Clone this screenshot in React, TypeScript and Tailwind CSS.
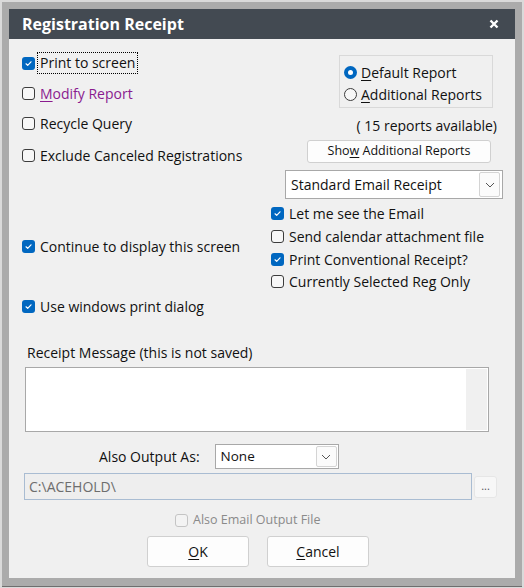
import React from 'react';

const font = { fontFamily: '"Open Sans", "Noto Sans", sans-serif' };

function Check({ checked = false, disabled = false }: { checked?: boolean; disabled?: boolean }) {
  if (checked) {
    return (
      <span className="flex h-[13px] w-[13px] shrink-0 items-center justify-center rounded-[3px] bg-[#0067c0]">
        <svg width="9" height="9" viewBox="0 0 9 9" fill="none">
          <path d="M2 4.8 L3.7 6.3 L7 2.8" stroke="white" strokeWidth="1.2" strokeLinecap="round" strokeLinejoin="round" />
        </svg>
      </span>
    );
  }
  return (
    <span
      className={`h-[13px] w-[13px] shrink-0 rounded-[3px] border ${
        disabled ? 'border-[#c4c4c4] bg-[#f3f3f3]' : 'border-[#3c3c3c] bg-[#f7f7f7]'
      }`}
    />
  );
}

function Radio({ checked = false }: { checked?: boolean }) {
  if (checked) {
    return (
      <span className="flex h-[13px] w-[13px] shrink-0 items-center justify-center rounded-full bg-[#0067c0]">
        <span className="h-[5px] w-[5px] rounded-full bg-white" />
      </span>
    );
  }
  return <span className="h-[13px] w-[13px] shrink-0 rounded-full border border-[#3c3c3c] bg-[#f7f7f7]" />;
}

function Chevron() {
  return (
    <svg width="10" height="6" viewBox="0 0 10 6" fill="none">
      <path d="M1 1 L5 5 L9 1" stroke="#555" strokeWidth="1" />
    </svg>
  );
}

function CheckRow({ checked, label, className = '' }: { checked?: boolean; label: React.ReactNode; className?: string }) {
  return (
    <div className={`flex h-[22px] items-center gap-[5px] ${className}`}>
      <Check checked={checked} />
      <span className="whitespace-nowrap">{label}</span>
    </div>
  );
}

export default function App() {
  return (
    <div className="h-[588px] w-[524px] bg-[#dadada] px-[2px] pt-[2px] pb-[1px] text-[14px] text-[#111]" style={font}>
      <div className="flex h-full flex-col border-b border-[#6e6e6e] bg-[#ababab] px-[7px] pt-[7px] pb-[7px]">
        {/* title bar */}
        <div className="flex h-[30px] shrink-0 items-center justify-between bg-[#434a52] pl-[13px] pr-[16px]">
          <span className="text-[16px] font-bold text-white">Registration Receipt</span>
          <svg width="10" height="10" viewBox="0 0 10 10">
            <path d="M1.5 1.5 L8.5 8.5 M8.5 1.5 L1.5 8.5" stroke="white" strokeWidth="2.4" />
          </svg>
        </div>

        <div className="flex h-[539px] flex-col bg-[#f0f0f0] pl-[13px]">
          {/* top section */}
          <div className="flex">
            <div className="flex w-[249px] flex-col">
              <div className="mt-[13px] flex h-[22px] items-center gap-[2px]">
                <Check checked />
                <span className="border border-dotted border-black px-[2px] leading-[20px] whitespace-nowrap">Print to screen</span>
              </div>
              <CheckRow
                className="mt-[8px]"
                label={
                  <span className="text-[#8a1b8f]">
                    <span className="underline underline-offset-2">M</span>odify Report
                  </span>
                }
              />
              <CheckRow className="mt-[8px]" label="Recycle Query" />
              <CheckRow className="mt-[10px]" label="Exclude Canceled Registrations" />
              <CheckRow className="mt-[69px]" checked label="Continue to display this screen" />
              <CheckRow className="mt-[38px]" checked label="Use windows print dialog" />
            </div>

            <div className="flex w-[232px] flex-col">
              <div className="mt-[16px] ml-[68px] flex h-[53px] w-[154px] flex-col border border-[#d9d9d9] pt-[5px] pl-[4px]">
                <div className="flex h-[22px] items-center gap-[4px]">
                  <Radio checked />
                  <span>
                    <span className="underline underline-offset-2">D</span>efault Report
                  </span>
                </div>
                <div className="flex h-[22px] items-center gap-[4px]">
                  <Radio />
                  <span>
                    <span className="underline underline-offset-2">A</span>dditional Reports
                  </span>
                </div>
              </div>
              <div className="mt-[8px] h-[20px] pr-[6px] text-right leading-[20px]">( 15 reports available)</div>
              <button className="mt-[4px] ml-[36px] flex h-[23px] w-[184px] items-center justify-center rounded-[3px] border border-[#d0d0d0] bg-[#fdfdfd] text-[12.5px]">
                Sho<span className="underline underline-offset-2">w</span>&nbsp;Additional Reports
              </button>
              <div className="mt-[7px] ml-[14px] flex h-[29px] w-[218px] items-center justify-between border border-[#a8a8a8] bg-white pr-[2px] pl-[5px]">
                <span>Standard Email Receipt</span>
                <span className="flex h-[25px] w-[21px] items-center justify-center rounded-[2px] border border-[#d4d4d4] bg-[#fbfbfb]">
                  <Chevron />
                </span>
              </div>
              <div className="mt-[3px] flex flex-col">
                <CheckRow className="h-[23px]" checked label="Let me see the Email" />
                <CheckRow className="h-[23px]" label="Send calendar attachment file" />
                <CheckRow className="h-[22px]" checked label="Print Conventional Receipt?" />
                <CheckRow className="h-[22px]" label="Currently Selected Reg Only" />
              </div>
            </div>
          </div>

          {/* receipt message */}
          <div className="mt-[26px] ml-[5px] h-[20px] leading-[20px]">Receipt Message (this is not saved)</div>
          <div className="mt-[4px] ml-[3px] flex h-[65px] w-[464px] justify-end border border-[#a8a8a8] bg-white p-px">
            <div className="w-[21px] bg-[#f0f0f0]" />
          </div>

          {/* output as */}
          <div className="mt-[12px] ml-[77px] flex items-center gap-[15px]">
            <span>Also Output As:</span>
            <div className="flex h-[25px] w-[124px] items-center justify-between border border-[#a8a8a8] bg-white pr-[1px] pl-[5px] text-[13.5px]">
              <span>None</span>
              <span className="flex h-[21px] w-[21px] items-center justify-center rounded-[2px] border border-[#d4d4d4] bg-[#fbfbfb]">
                <Chevron />
              </span>
            </div>
          </div>

          <div className="mt-[4px] ml-[2px] flex items-center gap-[2px]">
            <div className="flex h-[27px] w-[448px] items-center border border-[#a9bcd2] bg-[#eeeeee] pl-[4px] text-[#6d6d6d]">
              C:\ACEHOLD\
            </div>
            <div className="flex h-[22px] w-[23px] items-center justify-center rounded-[3px] border border-[#e6e6e6] bg-[#f7f7f7] pb-[2px] text-[11px] leading-none text-[#555]">
              ...
            </div>
          </div>

          <div className="mt-[10px] ml-[153px] flex h-[20px] items-center gap-[5px] text-[12.5px] text-[#8a8a8a]">
            <Check disabled />
            <span>Also Email Output File</span>
          </div>

          <div className="mt-[6px] ml-[125px] flex gap-[18px]">
            <button className="h-[31px] w-[102px] rounded-[3px] border border-[#d0d0d0] bg-[#fdfdfd]">
              <span className="underline underline-offset-2">O</span>K
            </button>
            <button className="h-[31px] w-[102px] rounded-[3px] border border-[#d0d0d0] bg-[#fdfdfd]">
              <span className="underline underline-offset-2">C</span>ancel
            </button>
          </div>
        </div>
      </div>
    </div>
  );
}
